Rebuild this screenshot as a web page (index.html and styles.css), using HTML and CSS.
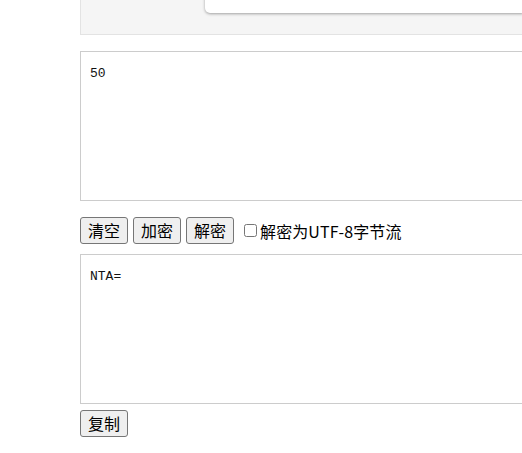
FILE: index.html
```html
<!DOCTYPE html>
<html lang="zh">
<head>
<meta charset="utf-8">
<title>Base64</title>
<link rel="stylesheet" href="styles.css">
</head>
<body>
<div class="page">
  <div class="panel">
    <div class="card"></div>
  </div>
  <textarea class="box box-in">50</textarea>
  <div class="actions">
    <button class="btn">清空</button>
    <button class="btn">加密</button>
    <button class="btn">解密</button>
    <label class="check"><input type="checkbox" class="cb">解密为UTF-8字节流</label>
  </div>
  <textarea class="box box-out">NTA=</textarea>
  <div class="copy-row">
    <button class="btn">复制</button>
  </div>
</div>
</body>
</html>
```

FILE: styles.css
```css
html, body {
  margin: 0;
  padding: 0;
  width: 522px;
  height: 453px;
  overflow: hidden;
  background: #fff;
}

.page {
  padding-left: 80px;
  width: 443px;
  font-family: "Noto Sans CJK SC", "Noto Sans", sans-serif;
}

.panel {
  margin-top: -50px;
  background: #f5f5f5;
  border: 1px solid #e3e3e3;
  border-right: 0;
  padding: 0 0 21px 124px;
}

.card {
  height: 62px;
  background: #fff;
  border-radius: 5px 0 0 5px;
  box-shadow: 0 1px 3px rgba(0, 0, 0, 0.35);
}

.box {
  display: block;
  box-sizing: border-box;
  width: 443px;
  height: 150px;
  margin: 0;
  border: 1px solid #cccccc;
  border-right: 0;
  padding: 14px 9px;
  font-family: "Liberation Mono", monospace;
  font-size: 13px;
  line-height: 15px;
  color: #111;
  resize: none;
  outline: none;
}

.box-in {
  margin-top: 16px;
}

.actions {
  display: flex;
  align-items: center;
  gap: 5px;
  margin-top: 16px;
  height: 27px;
}

.btn {
  box-sizing: border-box;
  height: 27px;
  padding: 0 7px;
  margin: 0;
  font-family: "Noto Sans CJK SC", sans-serif;
  font-size: 16px;
  line-height: 23px;
  color: #000;
  background: #efefef;
  border: 1px solid #767676;
  border-radius: 3px;
}

.check {
  display: flex;
  align-items: center;
  margin-left: 4px;
  font-size: 16px;
  letter-spacing: 0.1px;
  color: #000;
}

.cb {
  margin: 0 3px 0 1px;
  width: 13px;
  height: 13px;
}

.box-out {
  margin-top: 10px;
}

.copy-row {
  margin-top: 6px;
}
```
